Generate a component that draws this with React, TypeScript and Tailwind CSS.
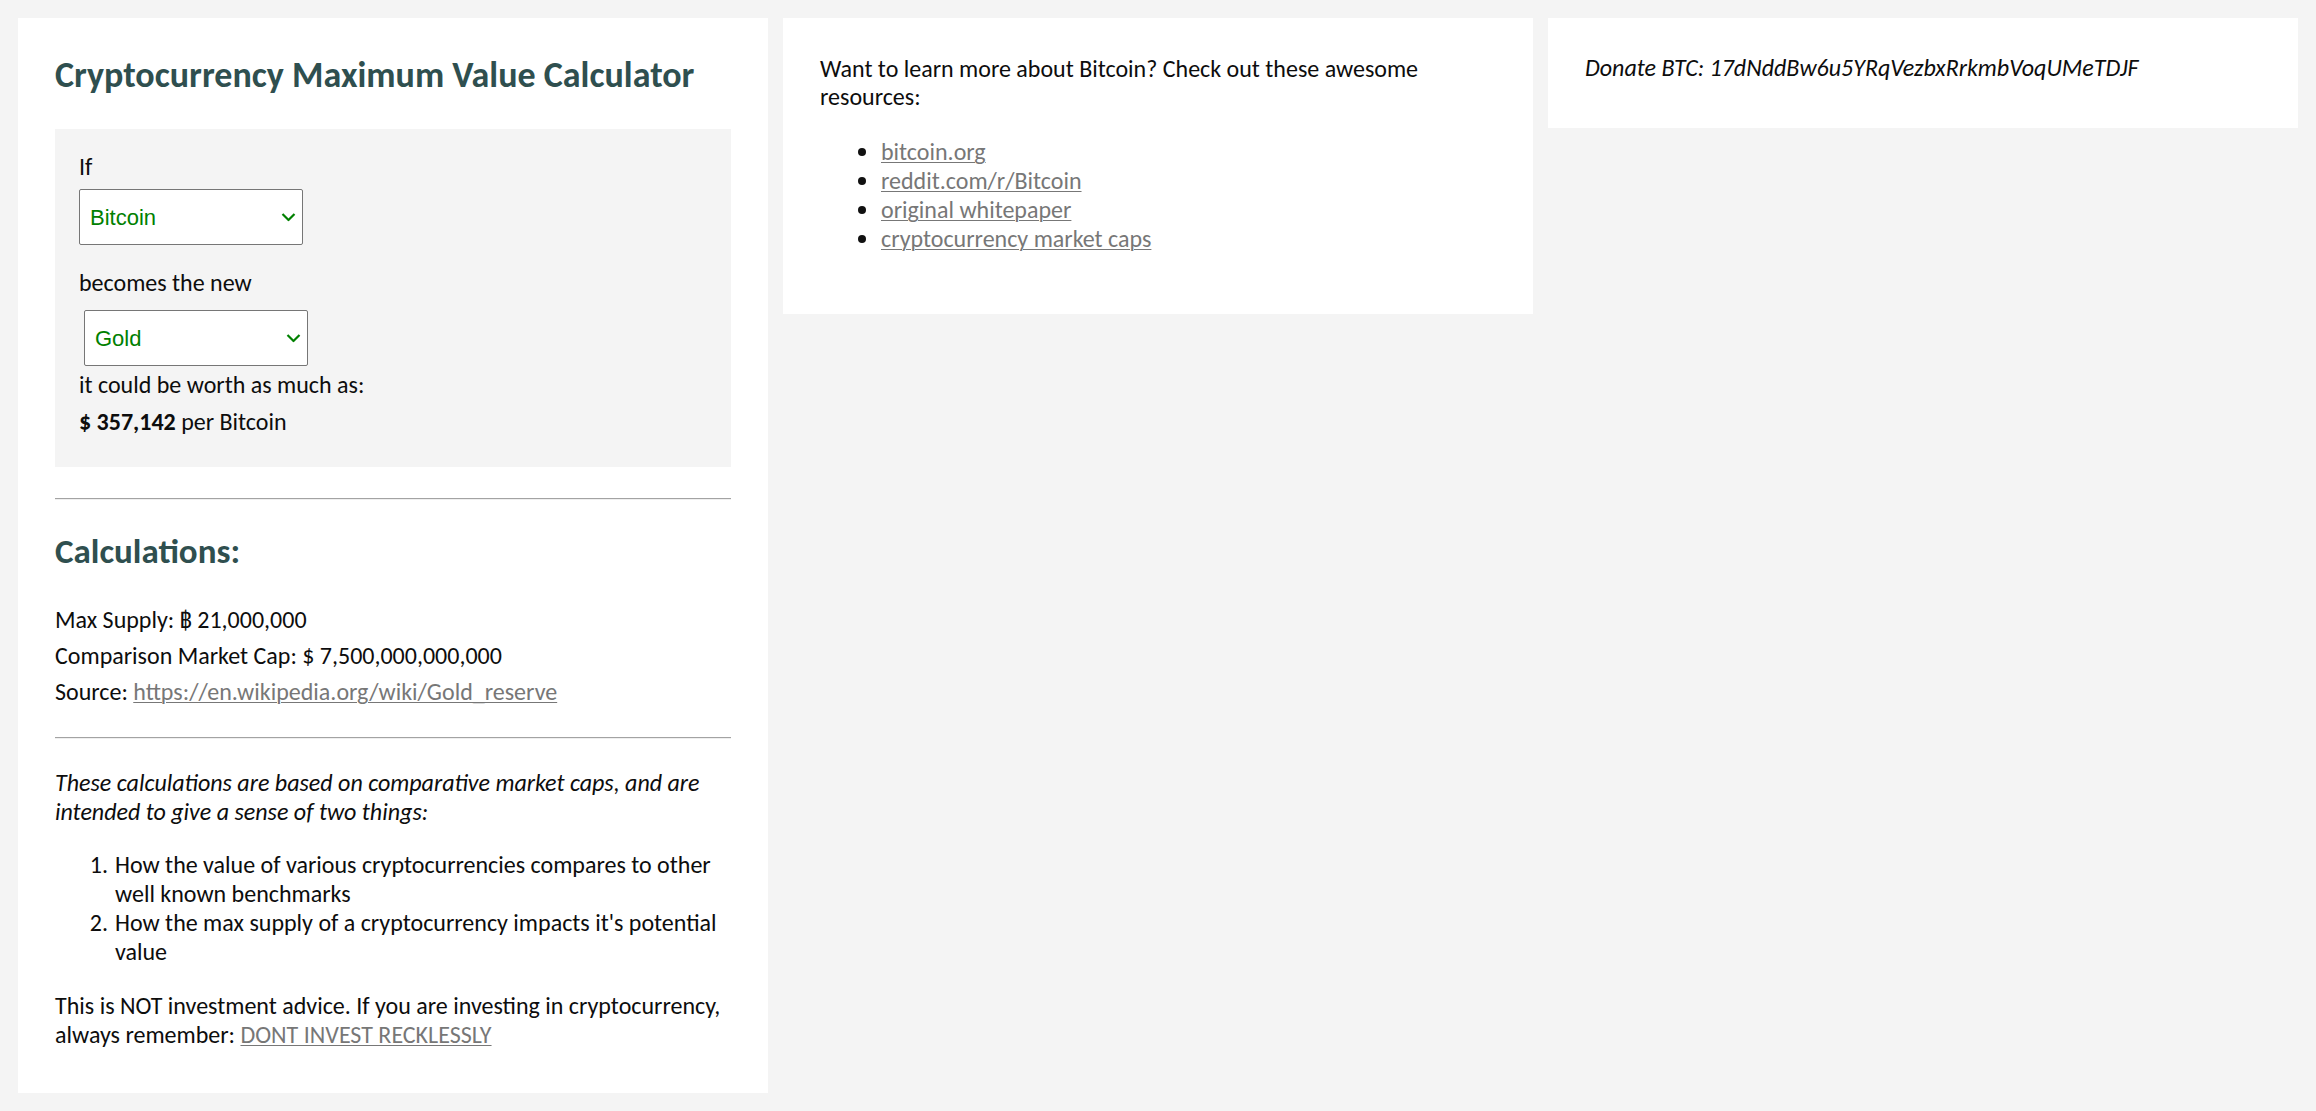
import React from 'react';

function Select({ value, options, className = '' }: { value: string; options: string[]; className?: string }) {
  return (
    <div className={`relative block w-[224px] h-[56px] ${className}`}>
      <select
        defaultValue={value}
        aria-label={value}
        className="appearance-none w-full h-full bg-white border border-[#767676] rounded-[2px] pl-[10px] text-[22px] text-[#008000] font-['Liberation_Sans',Arial,sans-serif] focus:outline-none"
      >
        {options.map(o => (
          <option key={o} value={o}>{o}</option>
        ))}
      </select>
      <svg
        className="pointer-events-none absolute right-[7px] top-1/2 -translate-y-1/2"
        width="15"
        height="9"
        viewBox="0 0 15 9"
        fill="none"
      >
        <path d="M1.5 1.5l6 6 6-6" stroke="#008000" strokeWidth="2.2" />
      </svg>
    </div>
  );
}

function Rule({ className = '' }: { className?: string }) {
  return <hr className={`h-0 border-0 border-t border-t-[#a3a3a3] border-b border-b-[#efefef] ${className}`} />;
}

const linkCls = 'text-[#777] underline decoration-1 underline-offset-2';

export default function App() {
  return (
    <div className="h-screen overflow-hidden bg-[#f4f4f4] px-[18px] pt-[18px] font-['Carlito','Lato',sans-serif] text-[24px] leading-[29px] text-[#0d0d0d]">
      <div className="grid grid-cols-3 gap-[15px] items-start">
        {/* calculator */}
        <div className="bg-white px-[37px] pt-[36px] pb-[44px]">
          <h2 className="text-[36px] leading-[43px] font-bold text-[#2f4f4f]">Cryptocurrency Maximum Value Calculator</h2>

          <div className="mt-[32px] bg-[#f4f4f4] pl-[24px] pt-[23px] pb-[31px]">
            <p>If</p>
            <Select className="mt-[8px]" value="Bitcoin" options={['Bitcoin', 'Ethereum', 'Litecoin', 'Ripple']} />
            <p className="mt-[23px]">becomes the new</p>
            <Select className="mt-[13px] ml-[5px]" value="Gold" options={['Gold', 'Silver', 'US Dollar', 'Apple']} />
            <p className="mt-[4px]">it could be worth as much as:</p>
            <p className="mt-[8px]">
              <b>$ 357,142</b> per Bitcoin
            </p>
          </div>

          <Rule className="mt-[31px]" />

          <h3 className="mt-[30px] text-[35px] leading-[42px] font-bold text-[#2f4f4f]">Calculations:</h3>
          <p className="mt-[33px]">Max Supply: ฿ 21,000,000</p>
          <p className="mt-[7px]">Comparison Market Cap: $ 7,500,000,000,000</p>
          <p className="mt-[7px]">
            Source: <a href="#" className={linkCls}>https://en.wikipedia.org/wiki/Gold_reserve</a>
          </p>

          <Rule className="mt-[31px]" />

          <p className="mt-[29px] italic">
            These calculations are based on comparative market caps, and are intended to give a sense of two things:
          </p>
          <ol className="mt-[24px]">
            <li className="flex">
              <span className="w-[60px] shrink-0 pr-[7px] text-right">1.</span>
              <span>How the value of various cryptocurrencies compares to other well known benchmarks</span>
            </li>
            <li className="flex">
              <span className="w-[60px] shrink-0 pr-[7px] text-right">2.</span>
              <span>How the max supply of a cryptocurrency impacts it's potential value</span>
            </li>
          </ol>
          <p className="mt-[25px]">
            This is NOT investment advice. If you are investing in cryptocurrency, always remember:{' '}
            <a href="#" className={linkCls}>DONT INVEST RECKLESSLY</a>
          </p>
        </div>

        {/* resources */}
        <div className="bg-white px-[37px] pt-[37px] pb-[61px]">
          <p className="pr-[40px] leading-[28px]">Want to learn more about Bitcoin? Check out these awesome resources:</p>
          <ul className="mt-[26px]">
            {['bitcoin.org', 'reddit.com/r/Bitcoin', 'original whitepaper', 'cryptocurrency market caps'].map(l => (
              <li key={l} className="flex items-center">
                <span className="ml-[38px] mr-[15px] w-[8px] h-[8px] rounded-full bg-[#111]" />
                <a href="#" className={linkCls}>{l}</a>
              </li>
            ))}
          </ul>
        </div>

        {/* donate */}
        <div className="bg-white px-[37px] pt-[35px] pb-[46px]">
          <p className="italic">Donate BTC: 17dNddBw6u5YRqVezbxRrkmbVoqUMeTDJF</p>
        </div>
      </div>
    </div>
  );
}
